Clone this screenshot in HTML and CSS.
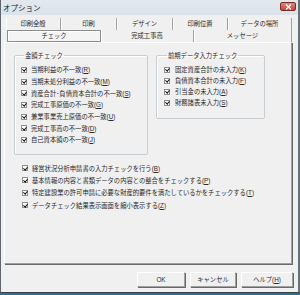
FILE: index.html
```html
<!DOCTYPE html>
<html lang="ja">
<head>
    <meta charset="UTF-8">
    <title>オプション</title>
    <link rel="stylesheet" href="styles.css">
</head>
<body>
    <div class="window">
        <div class="titlebar">
            <span class="title">オプション</span>
            <span class="close-btn">
                <svg width="7" height="6" viewBox="0 0 7 6"><path d="M1 0.5 L6 5.5 M6 0.5 L1 5.5" stroke="#fff" stroke-width="1.4"/></svg>
            </span>
        </div>

        <div class="tabs">
            <div class="tab-row row-back">
                <div class="tab" style="width:55px">印刷全般</div>
                <div class="tab" style="width:56px">印刷</div>
                <div class="tab" style="width:56px">デザイン</div>
                <div class="tab" style="width:55px">印刷位置</div>
                <div class="tab" style="width:64px">データの場所</div>
            </div>
            <div class="tab-row row-front">
                <div class="tab selected" style="width:94px">チェック</div>
                <div class="tab" style="width:93px">完成工事高</div>
                <div class="tab" style="width:98px">メッセージ</div>
            </div>
        </div>

        <div class="panel">
            <div class="groups">
                <fieldset class="group group-amount">
                    <legend>金額チェック</legend>
                    <label class="item"><span class="cb"></span><span>当期利益の不一致(<u>R</u>)</span></label>
                    <label class="item"><span class="cb"></span><span>当期未処分利益の不一致(<u>M</u>)</span></label>
                    <label class="item"><span class="cb"></span><span>資産合計･負債資本合計の不一致(<u>S</u>)</span></label>
                    <label class="item"><span class="cb"></span><span>完成工事原価の不一致(<u>G</u>)</span></label>
                    <label class="item"><span class="cb"></span><span>兼業事業売上原価の不一致(<u>U</u>)</span></label>
                    <label class="item"><span class="cb"></span><span>完成工事高の不一致(<u>D</u>)</span></label>
                    <label class="item"><span class="cb"></span><span>自己資本額の不一致(<u>J</u>)</span></label>
                </fieldset>
                <fieldset class="group group-prev">
                    <legend>前期データ入力チェック</legend>
                    <label class="item"><span class="cb"></span><span>固定資産合計の未入力(<u>K</u>)</span></label>
                    <label class="item"><span class="cb"></span><span>負債資本合計の未入力(<u>F</u>)</span></label>
                    <label class="item"><span class="cb"></span><span>引当金の未入力(<u>A</u>)</span></label>
                    <label class="item"><span class="cb"></span><span>財務諸表未入力(<u>S</u>)</span></label>
                </fieldset>
            </div>

            <div class="extra">
                <label class="item"><span class="cb"></span><span>経営状況分析申請書の入力チェックを行う(<u>B</u>)</span></label>
                <label class="item"><span class="cb"></span><span>基本情報の内容と書類データの内容との整合をチェックする(<u>P</u>)</span></label>
                <label class="item"><span class="cb"></span><span>特定建設業の許可申請に必要な財産的要件を満たしているかをチェックする(<u>T</u>)</span></label>
                <label class="item"><span class="cb"></span><span>データチェック結果表示画面を縮小表示する(<u>Z</u>)</span></label>
            </div>
        </div>

        <div class="buttons">
            <div class="btn" style="width:48px">OK</div>
            <div class="btn" style="width:46px">キャンセル</div>
            <div class="btn" style="width:52px"><span>ヘルプ(<u>H</u>)</span></div>
        </div>
    </div>
</body>
</html>
```

FILE: styles.css
```css
* {
    box-sizing: border-box;
    margin: 0;
    padding: 0;
}

body {
    width: 300px;
    height: 295px;
    overflow: hidden;
    background-color: #1f7597;
    font-family: "Liberation Sans", "Noto Sans CJK JP", sans-serif;
    font-size: 6.3px;
    color: #2a2a2a;
}

.window {
    width: 300px;
    height: 293px;
    background-color: #f0f0f0;
    border-left: 1px solid #5f6670;
    border-right: 2px solid #6a7078;
    border-bottom: 1px solid #3c4148;
    display: flex;
    flex-direction: column;
}

.titlebar {
    height: 15px;
    flex-shrink: 0;
    display: flex;
    align-items: center;
    justify-content: space-between;
    padding: 0 2px 0 2px;
    background: linear-gradient(#e3e8ee, #dbe2ea);
}

.title {
    font-size: 7.5px;
    color: #1a1a1a;
}

.close-btn {
    width: 16px;
    height: 9px;
    margin-top: -2px;
    display: flex;
    align-items: center;
    justify-content: center;
    background: linear-gradient(#e0867a, #c2453a);
    border: 1px solid #7a2c26;
    border-radius: 2px;
}

/* tabs */
.tabs {
    margin-top: 3px;
    display: flex;
    flex-direction: column;
}

.tab-row {
    display: flex;
    height: 12px;
}

.row-back {
    margin-left: 5px;
}

.row-front {
    margin-left: 6px;
}

.tab {
    display: flex;
    align-items: center;
    justify-content: center;
    border-right: 1px solid #a0a0a0;
    box-shadow: inset 1px 0 #fff;
    line-height: 1;
}

.tab.selected {
    border: 1px solid #8c8c8c;
    box-shadow: inset 1px 1px #fff;
    background-color: #f4f4f4;
}

/* page */
.panel {
    margin: 0 6px 0 3px;
    height: 222px;
    border-top: 1px solid #fff;
    border-left: 1px solid #fff;
    border-right: 1px solid #a0a0a0;
    border-bottom: 1px solid #a0a0a0;
    box-shadow: 1px 1px #696969;
    display: flex;
    flex-direction: column;
}

.groups {
    display: flex;
    align-items: flex-start;
    gap: 8px;
    margin: 8px 0 0 9px;
}

.group {
    border: 1px solid #c6cdd3;
    border-radius: 2px;
    box-shadow: inset 1px 1px #fff;
    padding: 4px 0 0 6px;
}

.group legend {
    margin-left: 3px;
    padding: 0 1px;
    line-height: 9px;
}

.group-amount {
    width: 134px;
    height: 104px;
}

.group-prev {
    width: 109px;
    height: 68px;
    padding-left: 7px;
}

.item {
    display: flex;
    align-items: center;
    gap: 4px;
    height: 11.7px;
    white-space: nowrap;
}

.group-prev .item {
    height: 11px;
    gap: 5px;
}

.cb {
    width: 6px;
    height: 6px;
    flex-shrink: 0;
    border: 1px solid #8e8f8f;
    background-color: #fff;
    position: relative;
}

.cb::after {
    content: "";
    position: absolute;
    left: 1px;
    top: -0.5px;
    width: 1.5px;
    height: 3px;
    border-right: 1px solid #111;
    border-bottom: 1px solid #111;
    transform: rotate(40deg);
}

.extra {
    margin: 7px 0 0 17px;
}

.extra .item {
    height: 12.3px;
}

/* buttons */
.buttons {
    display: flex;
    justify-content: flex-end;
    gap: 5px;
    margin: 8px 5px 0 0;
}

.btn {
    height: 15px;
    display: flex;
    align-items: center;
    justify-content: center;
    border-top: 1px solid #fff;
    border-left: 1px solid #fff;
    border-right: 1px solid #a0a0a0;
    border-bottom: 1px solid #a0a0a0;
    box-shadow: 1px 1px #696969;
}
```
